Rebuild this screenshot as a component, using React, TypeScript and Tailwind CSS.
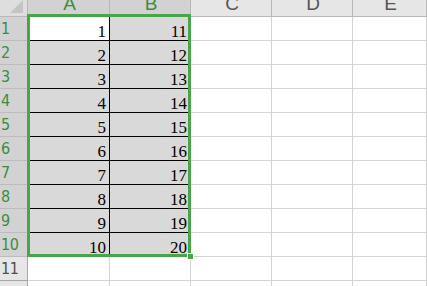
import React from "react";

const cols = ["A", "B", "C", "D", "E"];
const rows = Array.from({ length: 11 }, (_, i) => i + 1);

export default function App() {
  return (
    <div className="relative w-[427px] h-[286px] overflow-hidden bg-white">
      <div className="grid grid-cols-[28px_82px_81px_81px_81px_1fr] grid-rows-[17px_repeat(11,24px)_1fr] w-full h-full">
        {/* corner */}
        <div className="relative bg-[#dedede] border-r border-b border-[#b8b8b8] overflow-hidden">
          <svg className="absolute left-0 top-0" width="28" height="17" viewBox="0 0 28 17">
            <polygon points="23,0 23,13 10,13" fill="#c4c4c4" />
          </svg>
        </div>
        {cols.map((c, i) => {
          const sel = i < 2;
          return (
            <div
              key={c}
              className={
                "flex justify-center items-start overflow-hidden border-r border-b border-[#b8b8b8] " +
                (sel ? "bg-[#d2d2d2] text-[#3a8d3e]" : "bg-[#e6e6e6] text-[#555555]")
              }
            >
              <span className="font-['Liberation_Sans',Arial,sans-serif] text-[19px] leading-[8px] pl-[2px]">{c}</span>
            </div>
          );
        })}
        {rows.map((r) => {
          const selRow = r <= 10;
          return (
            <React.Fragment key={r}>
              <div
                className={
                  "flex items-center overflow-hidden border-r border-b " +
                  (selRow
                    ? "bg-[#d2d2d2] text-[#3a8d3e] border-[#bcbcbc]"
                    : "bg-[#e6e6e6] text-[#505050] border-[#a8a8a8]")
                }
              >
                <span className="font-['DejaVu_Sans_Condensed','DejaVu_Sans',sans-serif] text-[16px] leading-none pl-[1px] tracking-[-0.5px]">
                  {r}
                </span>
              </div>
              {cols.map((c, i) => {
                const inSel = selRow && i < 2;
                const active = r === 1 && i === 0;
                const val = inSel ? (i === 0 ? r : r + 10) : null;
                return (
                  <div
                    key={c}
                    className={
                      "flex items-end justify-end border-r border-b pr-[3px] " +
                      (inSel ? "border-black " : "border-[#d4d4d4] ") +
                      (active ? "bg-white" : inSel ? "bg-[#d9d9d9]" : "bg-white")
                    }
                  >
                    {val !== null && (
                      <span className="font-['Liberation_Serif','Times_New_Roman',serif] text-[17px] leading-none text-black">
                        {val}
                      </span>
                    )}
                  </div>
                );
              })}
            </React.Fragment>
          );
        })}
        {/* partial row 12 */}
        <div className="bg-[#e6e6e6] border-r border-[#a8a8a8]" />
        {cols.map((c) => (
          <div key={c} className="border-r border-[#d4d4d4]" />
        ))}
      </div>
      {/* selection border */}
      <div className="absolute left-[27px] top-[14px] w-[164px] h-[243px] border-[3px] border-[#4aa54a] pointer-events-none" />
      {/* fill handle */}
      <div className="absolute left-[187px] top-[253px] w-[7px] h-[7px] bg-[#4aa54a] border border-white" />
    </div>
  );
}
